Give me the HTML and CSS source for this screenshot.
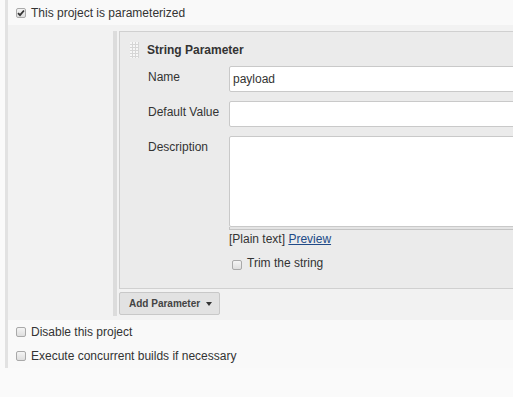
FILE: index.html
```html
<!DOCTYPE html>
<html lang="en">
<head>
    <meta charset="UTF-8">
    <title>Job Configuration</title>
    <link rel="stylesheet" href="styles.css">
</head>
<body>
    <div class="config">
        <div class="optional-block">
            <!-- parameterized toggle -->
            <div class="check-row">
                <span class="checkbox">
                    <svg width="8" height="8" viewBox="0 0 8 8"><path d="M1 4.2 L3 6.2 L7 1.5" fill="none" stroke="#333" stroke-width="1.8"/></svg>
                </span>
                <span>This project is parameterized</span>
            </div>

            <div class="block-body">
                <div class="repeated">
                    <div class="param-box">
                        <div class="param-head">
                            <span class="handle">
                                <svg width="9" height="16" viewBox="0 0 9 16">
                                    <defs>
                                        <pattern id="dots" width="3" height="3" patternUnits="userSpaceOnUse">
                                            <rect width="3" height="3" fill="#d6d6d6"/>
                                            <rect x="0" y="0" width="2" height="2" fill="#f7f7f7"/>
                                        </pattern>
                                    </defs>
                                    <rect width="9" height="16" fill="url(#dots)"/>
                                </svg>
                            </span>
                            <span class="param-title">String Parameter</span>
                        </div>
                        <div class="param-fields">
                            <div class="field-label">Name</div>
                            <div class="field"><input class="text-input" type="text" value="payload"></div>

                            <div class="field-label">Default Value</div>
                            <div class="field"><input class="text-input" type="text" value=""></div>

                            <div class="field-label">Description</div>
                            <div class="field">
                                <textarea class="text-area"></textarea>
                                <div class="textarea-handle"></div>
                                <div class="markup">[Plain text] <a href="#">Preview</a></div>
                                <div class="check-row trim-row">
                                    <span class="checkbox empty"></span>
                                    <span>Trim the string</span>
                                </div>
                            </div>
                        </div>
                    </div>
                    <button class="add-btn" type="button">Add Parameter <span class="caret"></span></button>
                </div>
            </div>

            <div class="check-row">
                <span class="checkbox empty"></span>
                <span>Disable this project</span>
            </div>
            <div class="check-row">
                <span class="checkbox empty"></span>
                <span>Execute concurrent builds if necessary</span>
            </div>
        </div>
    </div>
</body>
</html>
```

FILE: styles.css
```css
html {
    overflow: hidden;
}
body {
    margin: 0;
    background-color: #fafafa;
    font-family: "Liberation Sans", Arial, sans-serif;
    font-size: 12px;
    color: #333;
}
.config {
    width: 620px;
}
.optional-block {
    margin-left: 5px;
    border-left: 3px solid #e2e2e2;
    background-color: #f9f9f9;
}
.check-row {
    display: flex;
    align-items: center;
    padding: 4px 0 4px 8px;
    line-height: 16px;
}
.optional-block > .check-row:first-child {
    padding-top: 5px;
}
.checkbox {
    width: 8px;
    height: 8px;
    margin-right: 5px;
    border: 1px solid #a9a9a9;
    border-radius: 2px;
    background: linear-gradient(#f4f4f4, #dedede);
    display: flex;
    align-items: center;
    justify-content: center;
}
.block-body {
    background-color: #f2f2f2;
    padding: 6px 0 4px 105px;
}
.repeated {
    border-left: 4px solid #dcdcdc;
    padding: 0 0 1px 2px;
}
.param-box {
    background-color: #ebebeb;
    border: 1px solid #d0d0d0;
    border-right: none;
    padding-bottom: 17px;
}
.param-head {
    display: flex;
    align-items: center;
    padding: 10px 0 4px 10px;
    height: 16px;
}
.handle {
    display: flex;
    margin-right: 8px;
}
.param-title {
    font-weight: bold;
    line-height: 16px;
}
.param-fields {
    display: grid;
    grid-template-columns: 81px 1fr;
    row-gap: 9px;
    margin-top: 4px;
    padding-left: 28px;
}
.field-label {
    padding-top: 3px;
    line-height: 16px;
}
.text-input {
    display: block;
    width: 100%;
    height: 26px;
    box-sizing: border-box;
    border: 1px solid #c9c9c9;
    border-radius: 2px;
    padding: 0 3px;
    font-family: inherit;
    font-size: 12px;
    color: #333;
    background: #fff;
}
.text-area {
    display: block;
    width: 100%;
    height: 91px;
    box-sizing: border-box;
    border: 1px solid #c9c9c9;
    border-radius: 2px;
    resize: none;
    background: #fff;
    margin: 0;
}
.textarea-handle {
    height: 2px;
    border: 1px solid #c4c4c4;
    border-top: none;
    background-color: #e4e4e4;
}
.markup {
    line-height: 16px;
    margin-top: 1px;
}
.markup a {
    color: #204a87;
}
.trim-row {
    padding: 8px 0 0 3px;
}
.trim-row .checkbox {
    margin-top: 4px;
}
.add-btn {
    display: flex;
    align-items: center;
    margin-top: 3px;
    height: 23px;
    padding: 0 7px 0 9px;
    border: 1px solid #c8c8c8;
    border-radius: 2px;
    background-color: #e2e2e2;
    font-family: inherit;
    font-size: 10px;
    font-weight: bold;
    color: #444;
    white-space: nowrap;
}
.caret {
    margin-left: 6px;
    border-left: 3px solid transparent;
    border-right: 3px solid transparent;
    border-top: 4px solid #333;
}
```
